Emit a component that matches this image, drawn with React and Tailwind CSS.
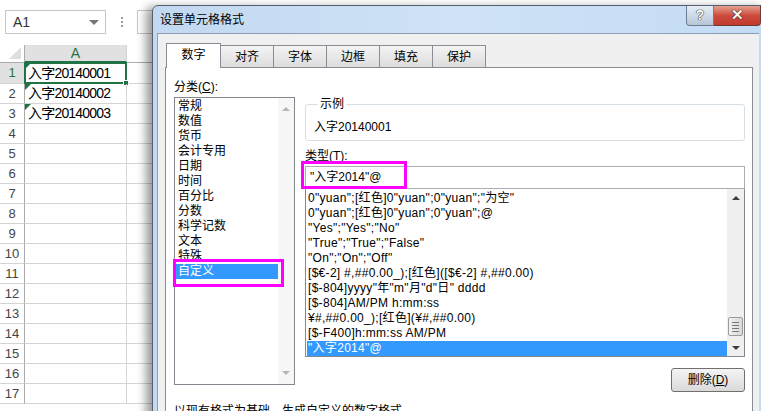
import React from "react";

const cats = ["常规", "数值", "货币", "会计专用", "日期", "时间", "百分比", "分数", "科学记数", "文本", "特殊", "自定义"];

const types = [
  '0"yuan";[红色]0"yuan";0"yuan";"为空"',
  '0"yuan";[红色]0"yuan";0"yuan";@',
  '"Yes";"Yes";"No"',
  '"True";"True";"False"',
  '"On";"On";"Off"',
  "[$€-2] #,##0.00_);[红色]([$€-2] #,##0.00)",
  '[$-804]yyyy"年"m"月"d"日" dddd',
  "[$-804]AM/PM h:mm:ss",
  "¥#,##0.00_);[红色](¥#,##0.00)",
  "[$-F400]h:mm:ss AM/PM",
  '"入字2014"@',
];

const tabs = ["对齐", "字体", "边框", "填充", "保护"];

const rows = Array.from({ length: 17 }, (_, i) => i + 1);
const cellText = { 1: "入字20140001", 2: "入字20140002", 3: "入字20140003" };

function UpArrow({ dim }) {
  return (
    <div className={`w-0 h-0 border-x-[4px] border-x-transparent border-b-[4px] ${dim ? "border-b-[#b4b4b4]" : "border-b-[#3c3c3c]"}`}></div>
  );
}

function DownArrow({ dim }) {
  return (
    <div className={`w-0 h-0 border-x-[4px] border-x-transparent border-t-[4px] ${dim ? "border-t-[#b4b4b4]" : "border-t-[#3c3c3c]"}`}></div>
  );
}

export default function App() {
  return (
    <div className="relative w-[761px] h-[411px] overflow-hidden bg-white font-['Liberation_Sans','Noto_Sans_CJK_SC',sans-serif] text-black">
      {/* 表格区 */}
      <div className="h-[45px] flex items-start pt-[10px] pl-[5px]">
        <div className="w-[101px] h-[24px] border border-[#c6c6c6] flex items-center pl-[7px] pr-[6px] text-[14px] text-[#333]">
          A1
          <div className="ml-auto w-0 h-0 border-x-[5px] border-x-transparent border-t-[5px] border-t-[#777]"></div>
        </div>
        <div className="ml-[15px] mt-[7px] flex flex-col gap-[2px]">
          <div className="w-[2px] h-[2px] bg-[#9a9a9a]"></div>
          <div className="w-[2px] h-[2px] bg-[#9a9a9a]"></div>
          <div className="w-[2px] h-[2px] bg-[#9a9a9a]"></div>
        </div>
        <div className="ml-[14px] w-[100px] h-[24px] border border-[#c6c6c6]"></div>
      </div>

      <div className="flex h-[18px]">
        <div className="w-[25px] border-r border-b border-[#ababab] flex items-end justify-end pr-[3px] pb-[3px]">
          <div className="w-0 h-0 border-l-[12px] border-l-transparent border-b-[12px] border-b-[#dfdfdf]"></div>
        </div>
        <div className="w-[102px] bg-[#e1e1e1] border-r border-[#d4d4d4] border-b-2 border-b-[#217346] flex items-center justify-center text-[14px] text-[#217346]">
          A
        </div>
        <div className="flex-1 border-b border-[#ababab]"></div>
      </div>

      {rows.map((r) => (
        <div key={r} className={`flex ${r === 1 ? "h-[21px]" : "h-[20px]"}`}>
          <div
            className={`w-[25px] border-r border-r-[#ababab] border-b border-b-[#d4d4d4] flex items-center justify-center text-[13px] ${
              r === 1 ? "text-[#217346] bg-[#e1e1e1]" : "text-[#444]"
            }`}
          >
            {r}
          </div>
          <div className="relative w-[102px] border-r border-b border-[#d4d4d4] flex items-center pl-[3px] text-[14px] tracking-[-0.8px]">
            {cellText[r] && (
              <div className="absolute top-0 left-0 w-0 h-0 border-t-[6px] border-t-[#1e7145] border-r-[6px] border-r-transparent"></div>
            )}
            {cellText[r]}
            {r === 1 && (
              <div className="absolute -left-[1px] -top-[1px] -right-[1px] -bottom-[1px] border-2 border-[#217346]">
                <div className="absolute -right-[4px] -bottom-[4px] w-[6px] h-[6px] bg-[#217346] border border-white"></div>
              </div>
            )}
          </div>
          <div className="flex-1 border-b border-[#d4d4d4]"></div>
        </div>
      ))}

      {/* 对话框 */}
      <div className="absolute left-[152px] top-[5px] w-[616px] h-[420px] rounded-t-[6px] border border-[#555f6d] bg-gradient-to-r from-[#c2d9f1] via-[#cfe2f6] to-[#c3dcf5] shadow-[-6px_2px_10px_rgba(0,0,0,0.4)] flex flex-col">
        <div className="shrink-0 h-[27px] flex items-center pl-[7px] relative">
          <span className="text-[12px] leading-[15px] mt-[2px]">设置单元格格式</span>
          <div className="ml-auto self-start flex h-[20px] mr-[6px]">
            <div className="w-[28px] h-full rounded-bl-[4px] border border-t-0 border-[#6d7d90] bg-gradient-to-b from-[#e6eef6] to-[#b6c6d8] flex items-center justify-center text-[14px] font-bold text-white [text-shadow:0_0_1px_#000,0_0_1px_#000]">
              ?
            </div>
            <div className="w-[47px] h-full rounded-br-[4px] border border-t-0 border-l-0 border-[#6d3b36] bg-gradient-to-b from-[#e3a193] via-[#cc4b3c] to-[#c23a2d] flex items-center justify-center text-[15px] font-bold text-white [text-shadow:0_0_1px_#000,0_0_1px_#000]">
              ✕
            </div>
          </div>
        </div>

        <div className="flex-1 min-h-0 ml-[4px] mr-[8px] border-l border-t border-[#8d9db1] bg-[#f0f0f0] pt-[9px]">
          {/* 选项卡 */}
          <div className="ml-[7px] flex items-end h-[24px] pl-[1px] text-[12px]">
            <div className="relative z-10 w-[55px] h-[25px] mb-[-1px] bg-white border border-b-0 border-[#898c95] flex items-center justify-center pb-[2px]">
              数字
            </div>
            {tabs.map((t) => (
              <div
                key={t}
                className="w-[53px] h-[22px] border-t border-r border-[#898c95] bg-gradient-to-b from-[#f4f4f4] to-[#dcdcdc] flex items-center justify-center"
              >
                {t}
              </div>
            ))}
          </div>

          <div className="ml-[7px] w-[588px] h-[360px] border border-[#898c95] bg-white pt-[12px] pl-[8px] text-[12px] leading-[15px]">
            <div className="flex gap-[10px] items-start">
              {/* 分类 */}
              <div className="w-[121px]">
                <div className="h-[17px]">
                  分类(<span className="underline">C</span>):
                </div>
                <div className="h-[288px] border border-[#828790] flex">
                  <div className="flex-1 pt-[1px]">
                    {cats.map((c) => (
                      <div
                        key={c}
                        className={`h-[15px] pl-[3px] ${c === "自定义" ? "bg-[#3399ff] text-white" : ""}`}
                      >
                        {c}
                      </div>
                    ))}
                  </div>
                  <div className="w-[16px] bg-[#f7f7f7] flex flex-col items-center justify-between py-[9px]">
                    <UpArrow dim />
                    <DownArrow dim />
                  </div>
                </div>
              </div>

              {/* 右侧 */}
              <div className="w-[440px] mt-[17px] flex flex-col">
                <fieldset className="border border-[#d5dfe5] rounded-[3px] pt-[8px] pb-[5px] pl-[8px]">
                  <legend className="ml-[4px] px-[2px]">示例</legend>
                  <div className="h-[15px]">入字20140001</div>
                </fieldset>

                <div className="mt-[8px] h-[15px] mb-[2px]">
                  类型(<span className="underline">T</span>):
                </div>
                <div className="h-[23px] border border-[#abadb3] flex items-center pl-[4px]">"入字2014"@</div>
                <div className="h-[168px] border border-[#828790] border-t-0 flex">
                  <div className="flex-1 pt-[2px] pl-[1px] tracking-[0.3px]">
                    {types.map((t, i) => (
                      <div
                        key={i}
                        className={`h-[15px] pl-[1px] whitespace-nowrap ${i === types.length - 1 ? "bg-[#3399ff] text-white" : ""}`}
                      >
                        {t}
                      </div>
                    ))}
                  </div>
                  <div className="w-[17px] bg-[#f0f0f0] flex flex-col items-center">
                    <div className="h-[17px] flex items-center justify-center">
                      <UpArrow />
                    </div>
                    <div className="mt-auto w-[15px] h-[19px] rounded-[2px] border border-[#9b9b9b] bg-gradient-to-r from-[#f2f2f2] to-[#d8d8d8] flex flex-col items-center justify-center gap-[2px]">
                      <div className="w-[7px] h-px bg-[#777]"></div>
                      <div className="w-[7px] h-px bg-[#777]"></div>
                      <div className="w-[7px] h-px bg-[#777]"></div>
                      <div className="w-[7px] h-px bg-[#777]"></div>
                    </div>
                    <div className="h-[3px]"></div>
                    <div className="h-[17px] flex items-center justify-center">
                      <DownArrow />
                    </div>
                  </div>
                </div>

                <div className="mt-[11px] self-end w-[74px] h-[24px] border border-[#707070] rounded-[3px] bg-gradient-to-b from-[#f4f4f4] to-[#dadada] flex items-center justify-center">
                  删除(<span className="underline">D</span>)
                </div>
              </div>
            </div>
            <div className="mt-[12px]">以现有格式为基础，生成自定义的数字格式。</div>
          </div>
        </div>
      </div>

      {/* 标注框 */}
      <div className="absolute left-[173px] top-[259px] w-[111px] h-[28px] border-[3px] border-[#ff00ff]"></div>
      <div className="absolute left-[301px] top-[161px] w-[106px] h-[28px] border-[3px] border-[#ff00ff]"></div>
    </div>
  );
}
